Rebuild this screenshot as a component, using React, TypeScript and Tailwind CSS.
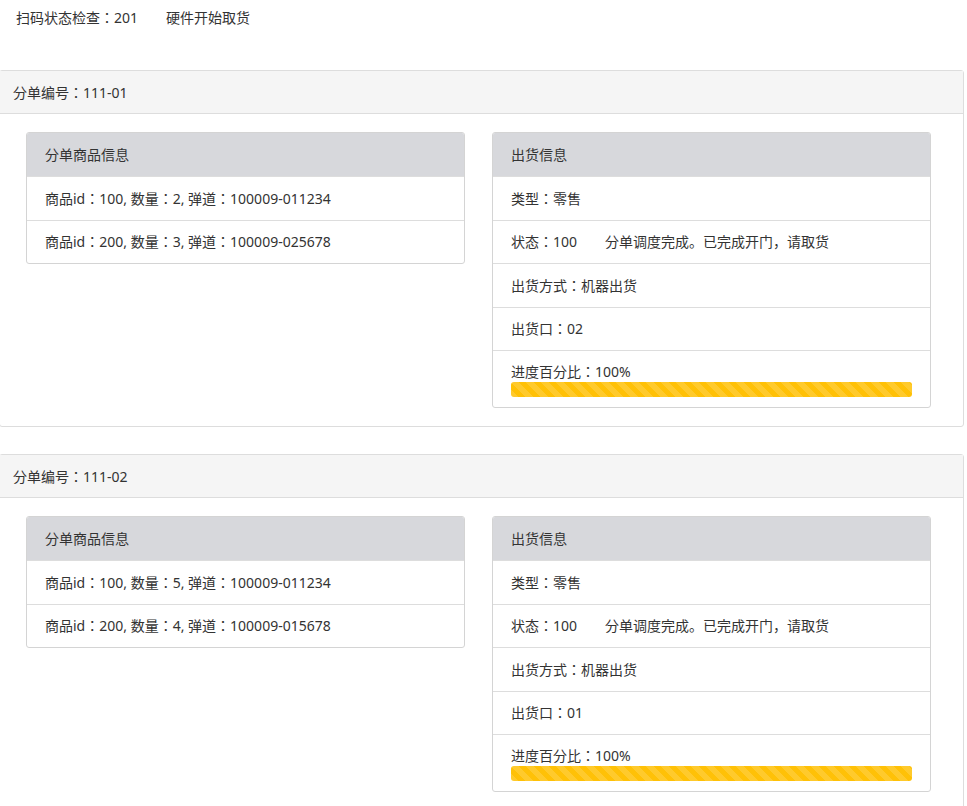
/* ── Pickup status page ── */

const FONT = { fontFamily: '"Noto Sans", "Noto Sans CJK JP", "Noto Sans CJK SC", sans-serif' };

type SubOrder = {
  no: string;
  items: { id: number; qty: number; lane: string }[];
  port: string;
};

const ORDERS: SubOrder[] = [
  {
    no: "111-01",
    items: [
      { id: 100, qty: 2, lane: "100009-011234" },
      { id: 200, qty: 3, lane: "100009-025678" },
    ],
    port: "02",
  },
  {
    no: "111-02",
    items: [
      { id: 100, qty: 5, lane: "100009-011234" },
      { id: 200, qty: 4, lane: "100009-015678" },
    ],
    port: "01",
  },
];

function Row({ children }: { children: React.ReactNode }) {
  return (
    <div className="h-[43.5px] flex items-center px-[18px] border-t border-[#dddddd]">{children}</div>
  );
}

function InnerPanel({ title, children }: { title: string; children: React.ReactNode }) {
  return (
    <div className="w-[439px] border border-[#d4d4d4] rounded-[3px] overflow-hidden bg-white">
      <div className="h-[44px] flex items-center px-[18px] bg-[#d7d8dc] border-b border-[#c8c8c8]">
        {title}
      </div>
      <div className="-mt-px">{children}</div>
    </div>
  );
}

function OrderPanel({ order }: { order: SubOrder }) {
  return (
    <div className="-ml-px w-[965px] border border-[#dddddd] rounded-[3px]">
      <div className="h-[43px] flex items-center px-[13px] bg-[#f5f5f5] border-b border-[#dddddd]">
        分单编号：{order.no}
      </div>
      <div className="flex gap-[27px] pl-[26px] pt-[18px] pb-[18px] items-start">
        <InnerPanel title="分单商品信息">
          {order.items.map((it) => (
            <Row key={it.id}>
              商品id：{it.id}, 数量：{it.qty}, 弹道：{it.lane}
            </Row>
          ))}
        </InnerPanel>
        <InnerPanel title="出货信息">
          <Row>类型：零售</Row>
          <Row>
            状态：100<span className="ml-[28px]">分单调度完成。已完成开门，请取货</span>
          </Row>
          <Row>出货方式：机器出货</Row>
          <Row>出货口：{order.port}</Row>
          <div className="border-t border-[#dddddd] px-[18px] pt-[11px] pb-[10px]">
            <div className="leading-[20px]">进度百分比：100%</div>
            <div className="h-[15px] w-full rounded-[3px] bg-[#ffc107] bg-[linear-gradient(45deg,rgba(255,255,255,0.15)_25%,transparent_25%,transparent_50%,rgba(255,255,255,0.15)_50%,rgba(255,255,255,0.15)_75%,transparent_75%,transparent)] bg-[length:15px_15px]" />
          </div>
        </InnerPanel>
      </div>
    </div>
  );
}

export default function App() {
  return (
    <div className="w-[967px] min-h-[806px] bg-white text-[14px] text-[#333333] overflow-hidden" style={FONT}>
      <div className="pl-[16px] pt-[8px] h-[70px] leading-[20px]">
        扫码状态检查：201<span className="ml-[28px]">硬件开始取货</span>
      </div>
      <div className="flex flex-col gap-[27px]">
        {ORDERS.map((o) => (
          <OrderPanel key={o.no} order={o} />
        ))}
      </div>
    </div>
  );
}
